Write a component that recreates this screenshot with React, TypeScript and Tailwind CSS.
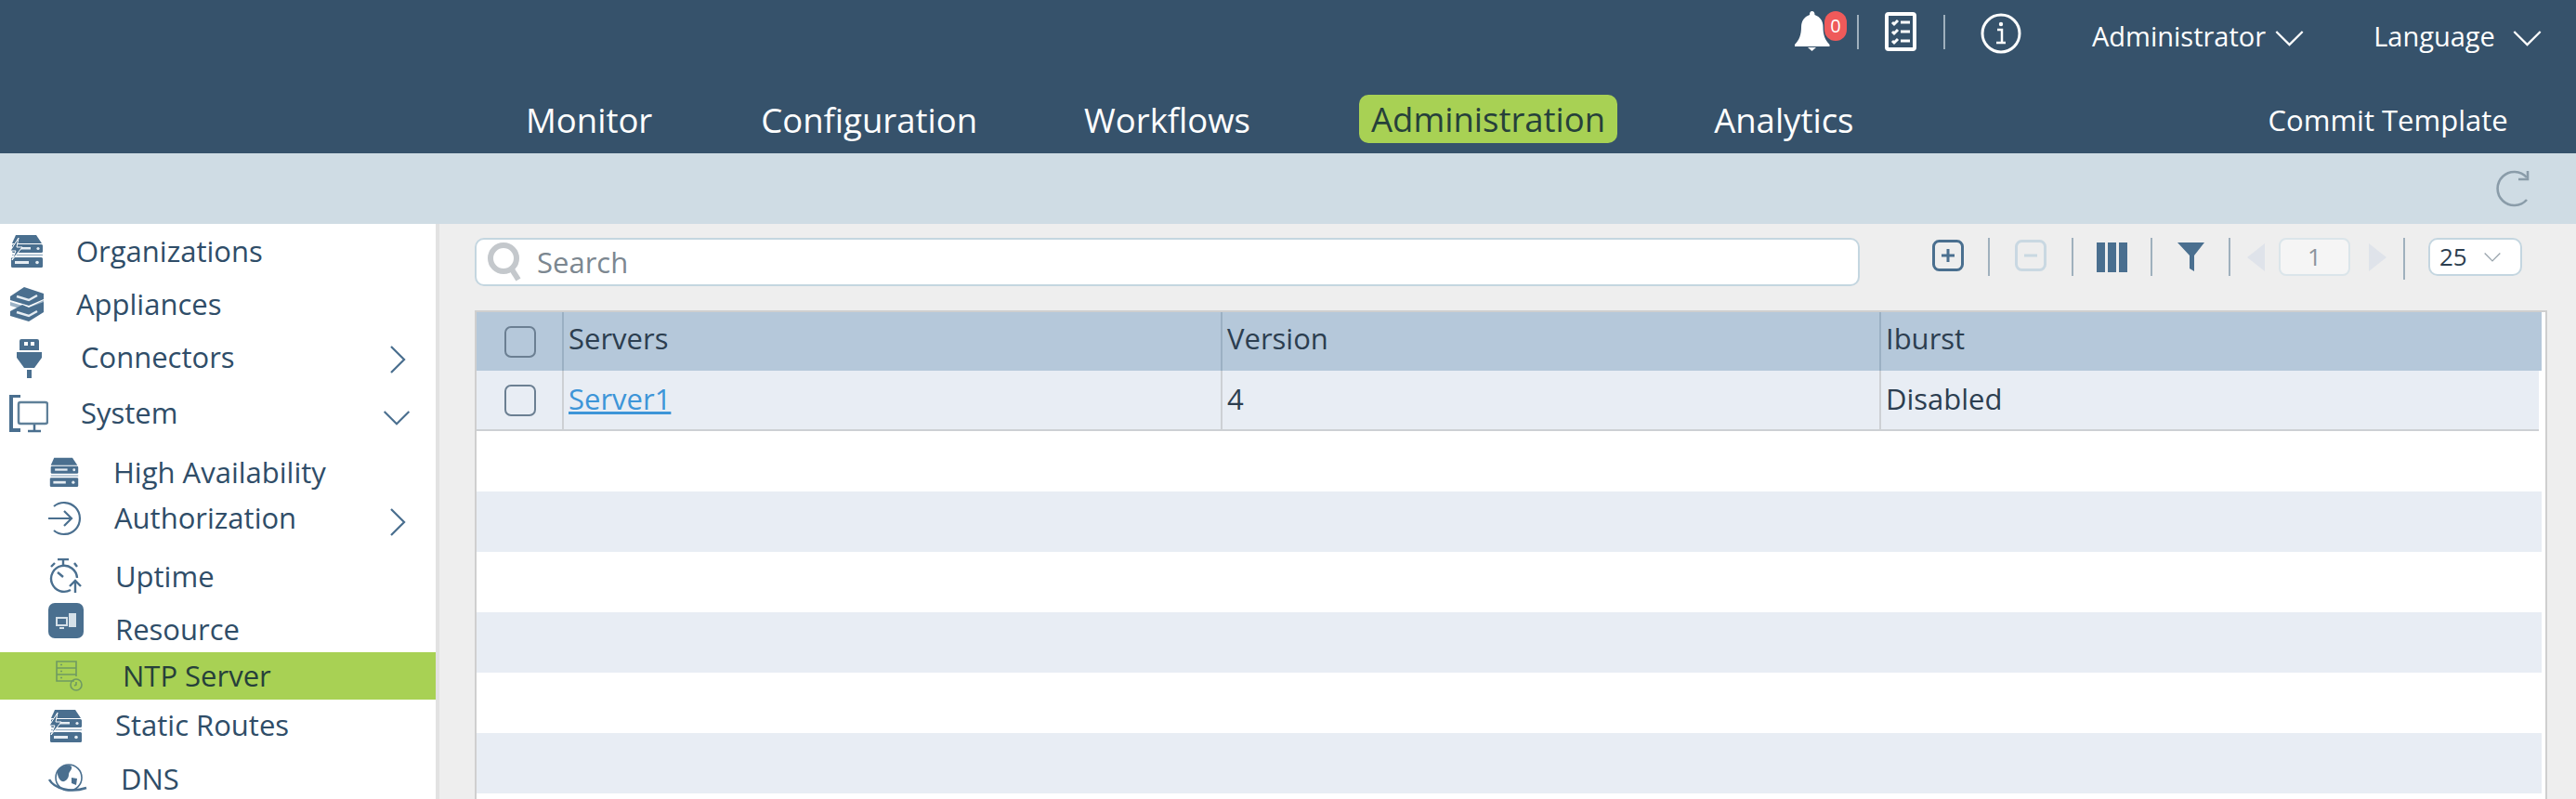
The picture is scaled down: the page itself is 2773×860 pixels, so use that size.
import type { ReactNode } from "react";

const ICON = "#4a6f8f";

function ServerStack({ bolt, className }: { bolt?: boolean; className: string }) {
  return (
    <svg viewBox="0 0 38 38" className={className}>
      <path d="M7 2h22l6 9H3z" fill={ICON} />
      <rect x="3" y="12" width="33" height="9" rx="1.5" fill={ICON} />
      <rect x="8" y="15" width="15" height="2.5" fill="#e6edf3" />
      <circle cx="31" cy="16.5" r="1.6" fill="#e6edf3" />
      <rect x="2" y="26" width="34" height="11" rx="1.5" fill={ICON} />
      <rect x="6" y="30" width="15" height="3" fill="#e6edf3" />
      <circle cx="30" cy="31.5" r="1.8" fill="#e6edf3" />
      <path d="M3 23.5h33" stroke="#9db3c6" strokeWidth="1.5" />
      {bolt && <path d="M10 5 1 19h6l-4 10 11-14H8z" fill={ICON} stroke="#fff" strokeWidth="1" />}
    </svg>
  );
}

function LayersIcon({ className }: { className: string }) {
  return (
    <svg viewBox="0 0 38 38" className={className}>
      <path d="M1 11 16 1l21 7v6L21 21 1 15z" fill={ICON} />
      <path d="M8 11l13 4 9-5" stroke="#e6edf3" strokeWidth="2.500" fill="none" />
      <path d="M1 17l20 6 16-8v3L21 27 1 21z" fill="#9db3c6" />
      <path d="M1 27l13-7 7 3 16-6v11L21 38 1 32z" fill={ICON} />
      <path d="M8 28l13 4 9-5" stroke="#e6edf3" strokeWidth="2.500" fill="none" />
    </svg>
  );
}

function PlugIcon({ className }: { className: string }) {
  return (
    <svg viewBox="0 0 27 43" className={className}>
      <path d="M5 1h17a2 2 0 0 1 2 2v10H3V3a2 2 0 0 1 2-2z" fill={ICON} />
      <rect x="8" y="4" width="4" height="4" fill="#fff" />
      <rect x="15" y="4" width="4" height="4" fill="#fff" />
      <path d="M0 15h27v6l-8 11H8L0 21z" fill={ICON} />
      <rect x="11" y="34" width="5" height="9" fill={ICON} />
    </svg>
  );
}

function SystemIcon({ className }: { className: string }) {
  return (
    <svg viewBox="0 0 42 41" className={className}>
      <path d="M0 0h12v3H4v33h8v4H0z" fill={ICON} />
      <rect x="10" y="8" width="31" height="23" rx="2" fill="#fff" stroke="#5f8099" strokeWidth="2.5" />
      <path d="M20 39h14M27 32v6" stroke={ICON} strokeWidth="2.5" />
    </svg>
  );
}

function AuthIcon({ className }: { className: string }) {
  return (
    <svg viewBox="0 0 38 38" fill="none" stroke={ICON} strokeWidth="2.2" className={className}>
      <path d="M6 6a17 17 0 1 1 0 26" />
      <path d="M0 19h24M17 11l8 8-8 8" />
    </svg>
  );
}

function UptimeIcon({ className }: { className: string }) {
  return (
    <svg viewBox="0 0 37 38" fill="none" stroke={ICON} strokeWidth="2.4" className={className}>
      <path d="M10 1h12M16 1v6M3 9l4-4M28 5l3 4" />
      <path d="M24 34a14 14 0 1 1 7-13" />
      <path d="M10 15l6 5" />
      <path d="M29 37V24M23 30l6-6 6 6" />
    </svg>
  );
}

function ResourceIcon({ className }: { className: string }) {
  return (
    <svg viewBox="0 0 38 38" className={className}>
      <rect width="38" height="38" rx="7" fill={ICON} />
      <rect x="9" y="16" width="11" height="8" fill="none" stroke="#d5e0e8" strokeWidth="2" />
      <path d="M12 27h5" stroke="#d5e0e8" strokeWidth="2" />
      <rect x="22" y="11" width="8" height="15" fill="#d5e0e8" />
    </svg>
  );
}

function NtpIcon({ className }: { className: string }) {
  return (
    <svg viewBox="0 0 29 33" fill="none" stroke="#6f9a62" strokeWidth="1.6" className={className}>
      <path d="M20 22H1V1h21v16M1 8h21M1 15h21" />
      <path d="M5 4.5h2M5 11.5h2M5 18.5h2" />
      <circle cx="22" cy="26" r="6" />
      <path d="M22 23v3l-2 1" />
    </svg>
  );
}

function GlobeIcon({ className }: { className: string }) {
  return (
    <svg viewBox="0 0 42 32" className={className}>
      <circle cx="22" cy="15" r="14" fill="#fff" stroke={ICON} strokeWidth="1.6" />
      <path d="M10 8c4-7 13-8 15-5 1 4-3 5-3 9s-4 8-7 7-6-7-5-11z" fill={ICON} />
      <path d="M1 17c5 9 22 15 40 9" fill="none" stroke={ICON} strokeWidth="2.5" />
      <path d="M25 15l6 1-1 7-5-2z" fill={ICON} />
    </svg>
  );
}

function BellIcon({ className }: { className: string }) {
  return (
    <svg viewBox="0 0 39 43" fill="#fff" className={className}>
      <path d="M19.5 0c2 0 3 1.500 3 4 6 2 9 7 9 13 0 8 2 14 7 19v2H1v-2c5-5 7-11 7-19 0-6 3-11 9-13 0-2.500 1-4 2.500-4z" />
      <path d="M15 39h9l-4.500 4z" />
    </svg>
  );
}

function ChecklistIcon({ className }: { className: string }) {
  return (
    <svg viewBox="0 0 34 42" className={className}>
      <rect x="2" y="2" width="30" height="38" rx="2" fill="none" stroke="#fff" strokeWidth="4" />
      <path d="M8 11l2 2 4-4M8 21l2 2 4-4M8 31l2 2 4-4M17 11h10M17 21h10M17 31h10" fill="none" stroke="#fff" strokeWidth="3" />
    </svg>
  );
}

function InfoIcon({ className }: { className: string }) {
  return (
    <svg viewBox="0 0 44 44" className={className} fill="none" stroke="#fff">
      <circle cx="22" cy="22" r="20" strokeWidth="3" />
      <circle cx="22" cy="12" r="2.200" fill="#fff" stroke="none" />
      <path d="M18 18h5v14M17 32h10" strokeWidth="2.500" />
    </svg>
  );
}

function PlusBox({ minus, className }: { minus?: boolean; className: string }) {
  const color = minus ? "#c9d8e2" : "#4a6f8f";
  return (
    <svg viewBox="0 0 34 34" fill="none" stroke={color} className={className}>
      <rect x="1.500" y="1.500" width="31" height="31" rx="6" strokeWidth="3" />
      <path d={minus ? "M10 17h14" : "M10 17h14M17 10v14"} strokeWidth="3" />
    </svg>
  );
}

function DownChevron({ className }: { className: string }) {
  return (
    <svg viewBox="0 0 32 18" fill="none" stroke="currentColor" strokeWidth="2.4" className={className}>
      <path d="M1 1l15 15L31 1" />
    </svg>
  );
}

function RightChevron({ className }: { className: string }) {
  return (
    <svg viewBox="0 0 18 32" fill="none" stroke="currentColor" strokeWidth="2.4" className={className}>
      <path d="M1 1l15 15L1 31" />
    </svg>
  );
}

function Checkbox() {
  return <div className="w-[34px] h-[34px] rounded-[7px] border-2 border-[#6b7f92]" />;
}

function Sep({ className }: { className: string }) {
  return <div className={`w-[2px] bg-[#9fb0bd] ${className}`} />;
}

interface NavRow {
  label: string;
  rowClass: string;
  iconBox: string;
  labelClass: string;
  icon: ReactNode;
  chevron?: ReactNode;
}

const navRows: NavRow[] = [
  { label: "Organizations", rowClass: "h-[58px]", iconBox: "pl-[10px] w-[82px]", labelClass: "", icon: <ServerStack bolt className="w-[38px] h-[38px]" /> },
  { label: "Appliances", rowClass: "h-[56px]", iconBox: "pl-[10px] w-[82px]", labelClass: "", icon: <LayersIcon className="w-[38px] h-[38px]" /> },
  {
    label: "Connectors",
    rowClass: "h-[60px]",
    iconBox: "pl-[18px] w-[87px]",
    labelClass: "-mt-[2px]",
    icon: <PlugIcon className="w-[27px] h-[43px]" />,
    chevron: <RightChevron className="w-[17px] h-[30px] text-[#4a6f8f] ml-auto mr-[32px] mt-[4px]" />,
  },
  {
    label: "System",
    rowClass: "h-[60px]",
    iconBox: "pl-[10px] w-[87px]",
    labelClass: "-mt-[2px]",
    icon: <SystemIcon className="w-[42px] h-[41px]" />,
    chevron: <DownChevron className="w-[30px] h-[16px] text-[#4a6f8f] ml-auto mr-[27px] mt-[10px]" />,
  },
  { label: "High Availability", rowClass: "h-[66px]", iconBox: "pl-[52px] w-[122px]", labelClass: "", icon: <ServerStack className="w-[34px] h-[36px]" /> },
  {
    label: "Authorization",
    rowClass: "h-[34px]",
    iconBox: "pl-[52px] w-[123px]",
    labelClass: "-mt-[2px]",
    icon: <AuthIcon className="w-[38px] h-[38px]" />,
    chevron: <RightChevron className="w-[17px] h-[30px] text-[#4a6f8f] ml-auto mr-[32px] mt-[8px]" />,
  },
  { label: "Uptime", rowClass: "h-[90px]", iconBox: "pl-[52px] w-[124px]", labelClass: "", icon: <UptimeIcon className="w-[37px] h-[38px]" /> },
  { label: "Resource", rowClass: "h-[37px]", iconBox: "pl-[52px] w-[124px] self-start -mt-[16px]", labelClass: "self-start -mt-[11px]", icon: <ResourceIcon className="w-[38px] h-[38px]" /> },
  { label: "NTP Server", rowClass: "h-[51px] bg-[#a8d154]", iconBox: "pl-[60px] w-[132px]", labelClass: "text-[#26403a]", icon: <NtpIcon className="w-[29px] h-[33px]" /> },
  { label: "Static Routes", rowClass: "h-[55px]", iconBox: "pl-[52px] w-[124px]", labelClass: "", icon: <ServerStack bolt className="w-[38px] h-[38px]" /> },
  { label: "DNS", rowClass: "h-[60px]", iconBox: "pl-[52px] w-[130px]", labelClass: "", icon: <GlobeIcon className="w-[42px] h-[32px]" /> },
];

const bands = ["bg-white", "bg-[#e8edf4]", "bg-white", "bg-[#e8edf4]", "bg-white", "bg-[#e8edf4]"];

export default function App() {
  return (
    <div className="h-[860px] overflow-hidden flex flex-col bg-[#eeeeee] font-['Open_Sans',sans-serif]">
      <header className="h-[165px] bg-[#36526b] shrink-0 text-white">
        <div className="h-[76px] relative flex items-center">
          <div className="relative ml-[1931px] w-[39px] h-[43px] -mt-[10px]">
            <BellIcon className="w-[39px] h-[43px]" />
            <span className="absolute left-[33px] top-0 w-[24px] h-[32px] rounded-full bg-[#ef5a5a] text-[20px] leading-[32px] text-center">0</span>
          </div>
          <Sep className="h-[37px] ml-[29px] -mt-[8px] bg-[#4f6a82]" />
          <ChecklistIcon className="w-[34px] h-[42px] ml-[28px] -mt-[8px]" />
          <Sep className="h-[37px] ml-[29px] -mt-[8px] bg-[#4f6a82]" />
          <InfoIcon className="w-[44px] h-[44px] ml-[38px] -mt-[4px]" />
          <span className="ml-[76px] text-[29px] mt-[2px]">Administrator</span>
          <DownChevron className="w-[31px] h-[17px] ml-[10px] mt-[7px]" />
          <span className="ml-[75px] text-[29px] mt-[2px]">Language</span>
          <DownChevron className="w-[31px] h-[17px] ml-[19px] mt-[7px]" />
        </div>
        <div className="h-[88px] flex items-start">
          <span className="ml-[566px] mt-[26px] text-[36.5px] leading-[54px]">Monitor</span>
          <span className="ml-[117px] mt-[26px] text-[36.5px] leading-[54px]">Configuration</span>
          <span className="ml-[115px] mt-[26px] text-[36.5px] leading-[54px]">Workflows</span>
          <span className="ml-[117px] mt-[26px] text-[36.5px] leading-[52px] px-[13px] rounded-[10px] bg-[#a8d154] text-[#26403a]">Administration</span>
          <span className="ml-[104px] mt-[26px] text-[36.5px] leading-[54px]">Analytics</span>
          <span className="ml-[446px] mt-[26px] text-[31px] leading-[54px]">Commit Template</span>
        </div>
      </header>

      <div className="h-[76px] shrink-0 bg-[#cfdce4] flex items-center justify-end pr-[50px]">
        <svg viewBox="0 0 37 40" fill="none" stroke="#8a9ca9" strokeWidth="2.6" className="w-[37px] h-[40px]">
          <path d="M34 8A18 18 0 1 0 34 32" />
          <path d="M35 1v9H25" />
        </svg>
      </div>

      <div className="flex flex-1 min-h-0">
        <aside className="w-[473px] shrink-0 bg-white border-r-4 border-[#e2e2e2] text-[31px] text-[#2f4d68]">
          {navRows.map((row) => (
            <div key={row.label} className={`flex items-center ${row.rowClass}`}>
              <div className={`shrink-0 ${row.iconBox}`}>{row.icon}</div>
              <span className={`whitespace-nowrap ${row.labelClass}`}>{row.label}</span>
              {row.chevron}
            </div>
          ))}
        </aside>

        <main className="flex-1 pl-[38px] pr-[31px] pt-[15px] min-w-0 text-[31px] text-[#2c3e50]">
          <div className="flex items-start h-[78px]">
            <div className="w-[1491px] h-[52px] rounded-[10px] bg-white border-2 border-[#c4d6e0] flex items-center pl-[10px]">
              <svg viewBox="0 0 40 44" fill="none" stroke="#c4c8cc" strokeWidth="6" className="w-[42px] h-[44px]">
                <circle cx="18" cy="18" r="14" />
                <path d="M27 30l7 11" />
              </svg>
              <span className="ml-[13px] text-[#7c8790]">Search</span>
            </div>
            <PlusBox className="w-[34px] h-[34px] ml-[78px] mt-[2px]" />
            <Sep className="h-[41px] ml-[26px]" />
            <PlusBox minus className="w-[34px] h-[34px] ml-[27px] mt-[2px]" />
            <Sep className="h-[41px] ml-[27px]" />
            <div className="flex gap-[3px] ml-[25px] mt-[5px] h-[32px]">
              <div className="w-[9px] bg-[#4a6f8f]" />
              <div className="w-[9px] bg-[#4a6f8f]" />
              <div className="w-[9px] bg-[#4a6f8f]" />
            </div>
            <Sep className="h-[41px] ml-[25px]" />
            <svg viewBox="0 0 29 31" fill="#4a6f8f" className="w-[29px] h-[31px] ml-[27px] mt-[5px]">
              <path d="M0 0h29L18 14v17l-5-3V14z" />
            </svg>
            <Sep className="h-[41px] ml-[26px]" />
            <svg viewBox="0 0 19 30" fill="#dfe3ea" className="w-[19px] h-[30px] ml-[18px] mt-[6px]">
              <path d="M19 0v30L0 15z" />
            </svg>
            <div className="w-[77px] h-[41px] ml-[15px] rounded-[8px] bg-[#f5f5f5] border-2 border-[#dbe5ea] text-center text-[26px] leading-[37px] text-[#8b949c]">1</div>
            <svg viewBox="0 0 19 30" fill="#dfe3ea" className="w-[19px] h-[30px] ml-[20px] mt-[6px]">
              <path d="M0 0v30l19-15z" />
            </svg>
            <Sep className="h-[45px] ml-[18px]" />
            <div className="w-[101px] h-[41px] ml-[25px] rounded-[10px] bg-white border-2 border-[#c4d6e0] flex items-center pl-[10px] text-[26px]">
              25
              <DownChevron className="w-[18px] h-[10px] ml-[18px] text-[#9aa5ad]" />
            </div>
          </div>

          <div className="bg-white border-2 border-b-0 border-[#cfcfcf] h-[526px]">
            <div className="pr-[4px]">
              <div className="h-[63px] flex bg-[#b5c8da] items-stretch">
                <div className="w-[94px] shrink-0 flex items-center pl-[30px] border-r-2 border-[#9bb0c3]">
                  <Checkbox />
                </div>
                <div className="w-[709px] shrink-0 flex items-center pl-[5px] pb-[6px] border-r-2 border-[#9bb0c3]">Servers</div>
                <div className="w-[709px] shrink-0 flex items-center pl-[5px] pb-[6px] border-r-2 border-[#9bb0c3]">Version</div>
                <div className="flex-1 flex items-center pl-[5px] pb-[6px]">Iburst</div>
              </div>
              <div className="h-[65px] flex bg-[#e8edf4] border-b-2 border-[#cdd0d4] mr-[3px]">
                <div className="w-[94px] shrink-0 flex items-center pl-[30px] border-r-2 border-[#cdd0d4]">
                  <Checkbox />
                </div>
                <div className="w-[709px] shrink-0 flex items-center pl-[5px] pb-[2px] border-r-2 border-[#cdd0d4]">
                  <a href="#" className="text-[#3d95d8] underline">Server1</a>
                </div>
                <div className="w-[709px] shrink-0 flex items-center pl-[5px] pb-[2px] border-r-2 border-[#cdd0d4]">4</div>
                <div className="flex-1 flex items-center pl-[5px] pb-[2px]">Disabled</div>
              </div>
              {bands.map((band, i) => (
                <div key={i} className={`h-[65px] ${band}`} />
              ))}
            </div>
          </div>
        </main>
      </div>
    </div>
  );
}
